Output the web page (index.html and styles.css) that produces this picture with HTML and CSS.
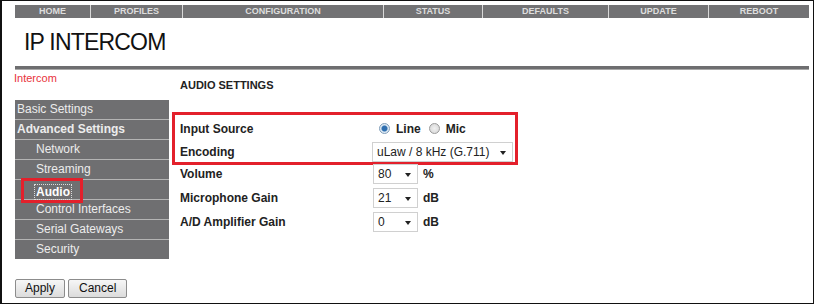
FILE: index.html
```html
<!DOCTYPE html>
<html>
<head>
<meta charset="utf-8">
<link rel="stylesheet" href="styles.css">
</head>
<body>
<div class="frame">
  <nav class="topnav">
    <span class="tab w-home">HOME</span>
    <span class="tab w-profiles">PROFILES</span>
    <span class="tab w-config">CONFIGURATION</span>
    <span class="tab w-status">STATUS</span>
    <span class="tab w-defaults">DEFAULTS</span>
    <span class="tab w-update">UPDATE</span>
    <span class="tab w-reboot">REBOOT</span>
  </nav>
  <h1 class="title">IP INTERCOM</h1>
  <div class="rule"></div>
  <div class="main">
    <aside class="side">
      <div class="crumb">Intercom</div>
      <ul class="menu">
        <li class="item">Basic Settings</li>
        <li class="item bold">Advanced Settings</li>
        <li class="item sub">Network</li>
        <li class="item sub">Streaming</li>
        <li class="item sub active"><span class="hl"><span class="focus">Audio</span></span></li>
        <li class="item sub">Control Interfaces</li>
        <li class="item sub">Serial Gateways</li>
        <li class="item sub">Security</li>
      </ul>
      <div class="buttons">
        <span class="btn">Apply</span>
        <span class="btn">Cancel</span>
      </div>
    </aside>
    <section class="content">
      <h2 class="heading">AUDIO SETTINGS</h2>
      <div class="boxed">
        <div class="row">
          <span class="label">Input Source</span>
          <span class="value">
            <span class="radio on"></span><span class="rlabel">Line</span>
            <span class="radio second"></span><span class="rlabel">Mic</span>
          </span>
        </div>
        <div class="row">
          <span class="label">Encoding</span>
          <span class="value"><span class="select wide">uLaw / 8 kHz (G.711)<span class="caret"></span></span></span>
        </div>
      </div>
      <div class="row plain">
        <span class="label">Volume</span>
        <span class="value"><span class="select small">80<span class="caret"></span></span><span class="unit">%</span></span>
      </div>
      <div class="row plain">
        <span class="label">Microphone Gain</span>
        <span class="value"><span class="select small">21<span class="caret"></span></span><span class="unit">dB</span></span>
      </div>
      <div class="row plain">
        <span class="label">A/D Amplifier Gain</span>
        <span class="value"><span class="select small">0<span class="caret"></span></span><span class="unit">dB</span></span>
      </div>
    </section>
  </div>
</div>
</body>
</html>
```
FILE: styles.css
```css
* { box-sizing: border-box; }
html, body { margin: 0; padding: 0; background: #fff; }
body { font-family: "Liberation Sans", Arial, sans-serif; }
.frame {
  width: 814px;
  height: 304px;
  border: 1px solid #111;
  border-left-width: 2px;
  padding: 4px 0 0 13px;
  position: relative;
  overflow: hidden;
}
.topnav {
  display: flex;
  width: 794px;
  height: 13px;
}
.tab {
  background: #727274;
  color: #dedede;
  font-size: 9px;
  font-weight: bold;
  line-height: 13px;
  text-align: center;
  border-right: 1px solid #d8d8d8;
}
.tab:last-child { border-right: none; }
.w-home { width: 76px; }
.w-profiles { width: 92px; }
.w-config { width: 201px; }
.w-status { width: 99px; }
.w-defaults { width: 126px; }
.w-update { width: 100px; }
.w-reboot { width: 100px; }
.title {
  margin: 10px 0 0 9px;
  font-size: 23px;
  font-weight: normal;
  color: #111;
  line-height: 28px;
  letter-spacing: -0.8px;
}
.rule {
  margin-top: 10px;
  width: 794px;
  height: 4px;
  background: #6e6e70;
  border-bottom: 1px solid #a8a8a8;
}
.main { display: flex; }
.side { width: 154px; }
.crumb {
  color: #e8323c;
  font-size: 11px;
  margin: 2px 0 0 -1px;
  line-height: 13px;
}
.menu {
  list-style: none;
  margin: 15px 0 0 0;
  padding: 0;
  background: #6f6f71;
}
.item {
  height: 20px;
  line-height: 19px;
  color: #ececec;
  font-size: 12px;
  padding-left: 2px;
  border-bottom: 1px solid #b4b4b4;
}
.item:last-child { border-bottom: none; height: 19px; }
.item.bold { font-weight: bold; }
.item.sub { padding-left: 21px; }
.item.active { position: relative; }
.hl {
  position: absolute;
  left: 6px;
  top: -2px;
  width: 62px;
  height: 25px;
  border: 3px solid #e3202b;
  padding: 2px 0 0 11px;
}
.focus {
  display: inline-block;
  color: #fff;
  font-weight: bold;
  font-size: 12px;
  line-height: 14px;
  outline: 1px dotted #ddd;
  padding: 0 1px;
}
.buttons {
  display: flex;
  gap: 3px;
  margin-top: 20px;
}
.btn {
  display: inline-block;
  height: 19px;
  line-height: 17px;
  font-size: 12px;
  color: #111;
  padding: 0 9px;
  border: 1px solid #8c8c8c;
  border-radius: 2px;
  background: linear-gradient(#f6f6f6, #dcdcdc);
}
.btn + .btn { padding: 0 10px; }
.content { margin-left: 3px; padding-top: 0; }
.heading {
  margin: 8px 0 0 8px;
  font-size: 11px;
  font-weight: bold;
  color: #222;
  line-height: 14px;
}
.boxed {
  margin-top: 20px;
  margin-bottom: -3px;
  width: 346px;
  height: 53px;
  border: 3px solid #e3202b;
  padding: 2px 0 0 5px;
}
.row {
  display: flex;
  align-items: center;
  height: 23px;
}
.plain { padding-left: 8px; height: 24px; }
.label {
  width: 193px;
  font-size: 12px;
  font-weight: bold;
  color: #222;
}
.value {
  display: flex;
  align-items: center;
  font-size: 12px;
  color: #222;
}
.radio {
  width: 11px;
  height: 11px;
  border-radius: 50%;
  border: 1px solid #9a9a9a;
  background: radial-gradient(circle, #f0f0f0 0, #d4d4d4 100%);
  margin-left: 6px;
}
.radio.second { margin-left: 8px; }
.radio.on {
  background: radial-gradient(circle, #2f6fb0 0, #2f6fb0 2.5px, #d8e6f2 3.5px, #eef3f8 100%);
  border-color: #7f9db9;
}
.rlabel { font-weight: bold; margin-left: 6px; }
.select {
  position: relative;
  height: 20px;
  line-height: 18px;
  border: 1px solid #d0d0d0;
  background: #fff;
  padding-left: 4px;
  font-size: 12px;
  color: #222;
}
.wide { width: 141px; margin-left: -1px; }
.small { width: 45px; }
.caret {
  position: absolute;
  right: 6px;
  top: 8px;
  width: 0;
  height: 0;
  border-left: 3px solid transparent;
  border-right: 3px solid transparent;
  border-top: 4px solid #222;
}
.unit { font-weight: bold; margin-left: 5px; }
```
